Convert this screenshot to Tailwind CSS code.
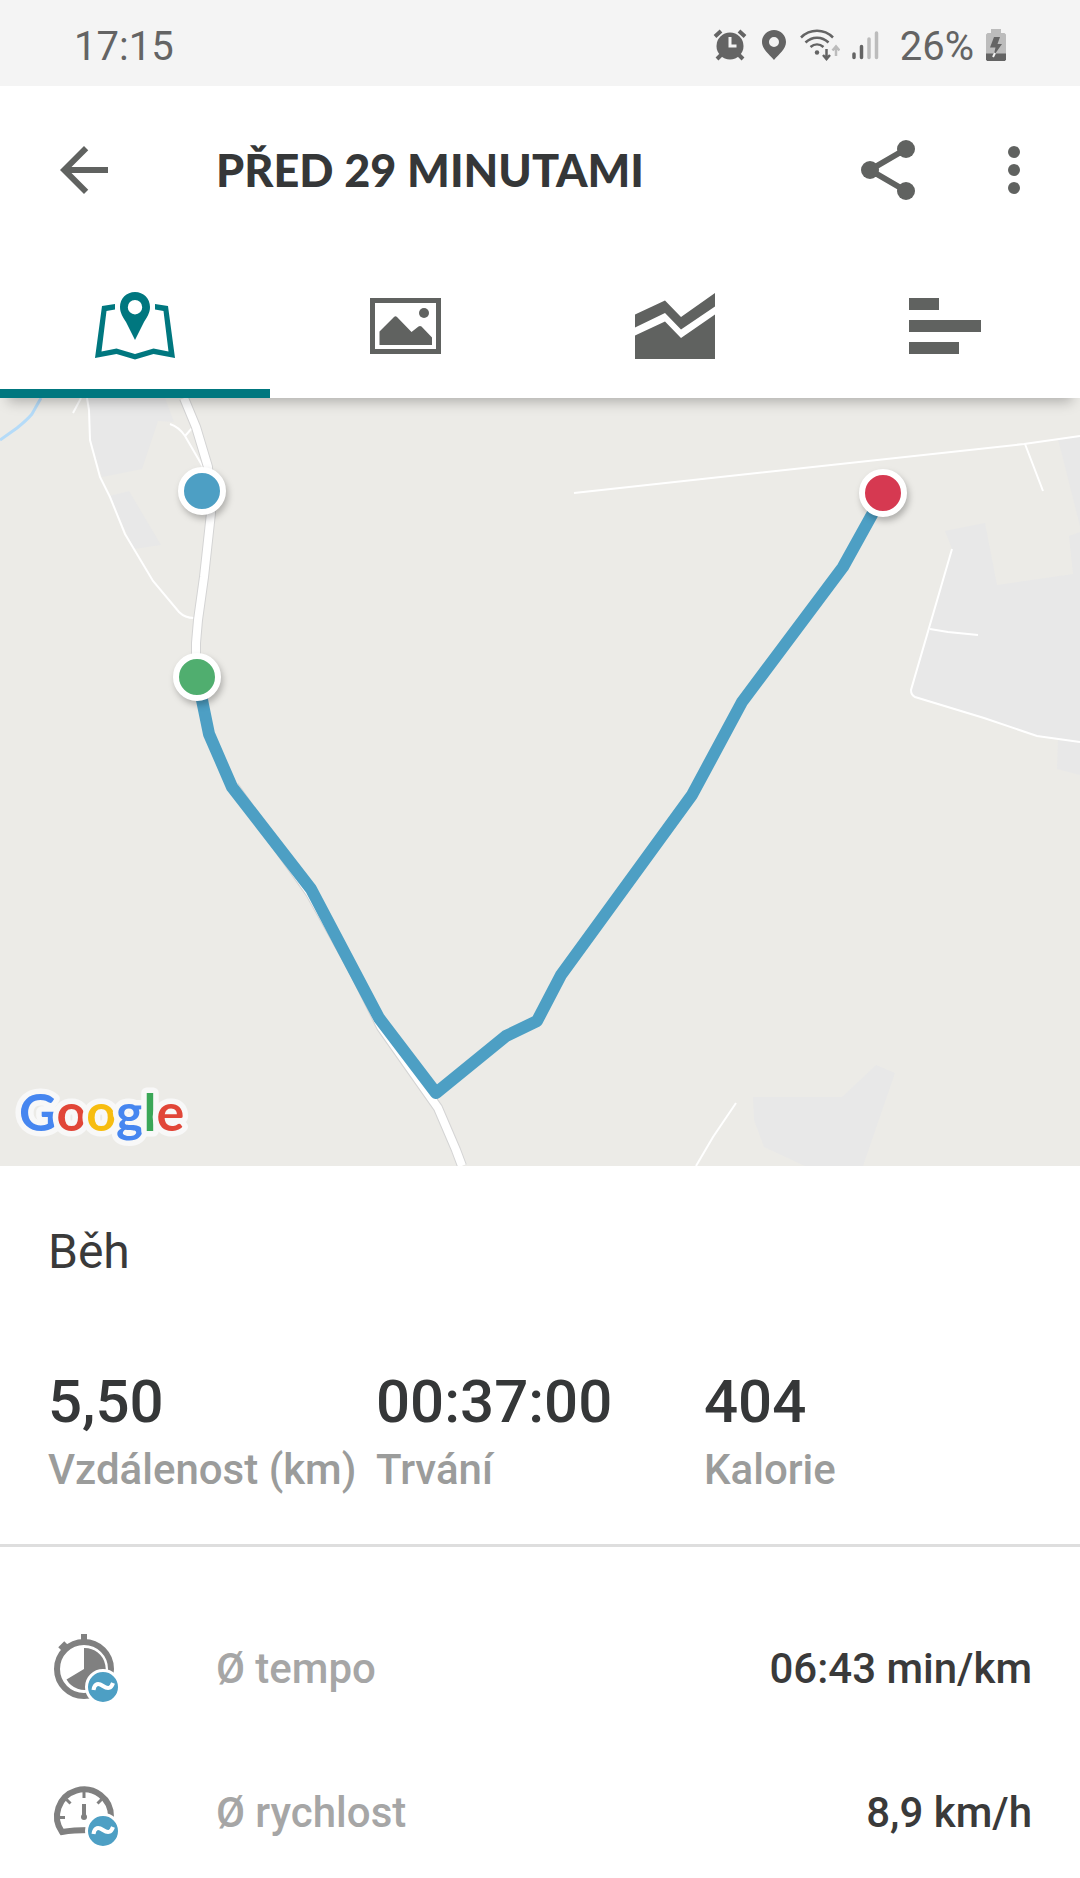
<!DOCTYPE html>
<html lang="cs">
<head>
    <meta charset="UTF-8">
    <meta name="viewport" content="width=device-width, initial-scale=1.0">
    <title>Běh - před 29 minutami</title>
    <script src="https://cdn.jsdelivr.net/npm/@tailwindcss/browser@4"></script>
</head>
<body class="bg-white text-[#3a3a3a] font-[Roboto,sans-serif] min-h-screen">
    <!-- Status bar -->
    <div class="bg-[#f4f4f4] text-[#646464] h-[86px] px-[74px] pt-2 flex items-center justify-between text-[40px] leading-[48px]">
        <span>17:15</span>
        <div class="flex items-center gap-3">
            <svg class="w-9 h-8 mb-1" viewBox="0 0 36 32" fill="none" stroke="currentColor">
                <circle cx="18" cy="17" r="13.5" fill="currentColor" stroke="none"/>
                <path d="M3 7.500l6-5.500M33 7.500l-6-5.500" stroke-width="4"/>
                <path d="M9 26l-4 4M27 26l4 4" stroke-width="4"/>
                <path d="M18 8v9h6.500" stroke="#f4f4f4" stroke-width="3"/>
            </svg>
            <svg class="w-7 h-8 mb-1" viewBox="0 0 28 32" fill="currentColor">
                <path fill-rule="evenodd" d="M14 1C7.400 1 2 6.200 2 13c0 7 7 12 12 18 5-6 12-11 12-18C26 6.200 20.600 1 14 1zm0 7a5 5 0 1 1 0 10 5 5 0 0 1 0-10z"/>
            </svg>
            <svg class="w-10 h-8 mb-1" viewBox="0 0 40 32" fill="none" stroke="currentColor" stroke-width="2.500">
                <path d="M1 8.500C10-.5 24-.5 33 8.500M5.500 13.500c6.500-6.500 16.500-6.500 23 0M10.500 18c4-3.500 9-3.500 13 0"/>
                <circle cx="17" cy="23.500" r="2.200" fill="currentColor" stroke="none"/>
                <path d="M26.500 20v9M23 26l3.500 4 3.500-4"/>
                <path d="M36 27v-9M32.500 21.500l3.500-4 3.500 4" stroke="#bcbcbc"/>
            </svg>
            <svg class="w-7 h-8 mb-1" viewBox="0 0 28 32" fill="none" stroke="currentColor" stroke-width="3.500" stroke-linecap="round">
                <path d="M2 25v3.500M9.500 17.500v11"/>
                <path d="M17 10v18.500M24.500 4v24.500" stroke="#bcbcbc"/>
            </svg>
            <span class="ml-2">26%</span>
            <svg class="w-5 h-8 mb-1" viewBox="0 0 20 32">
                <path d="M5 0h10v4h3.500L20 5.500V26H0V5.500L1.500 4H5z" fill="#bcbcbc"/>
                <path d="M0 24.500h20v6L19 32H1l-1-1.500z" fill="#646464"/>
                <path d="M8 8h6l-2.500 7H16L7.500 27l2-8.500H4z" fill="#646464"/>
                <path d="M9 24l-2 4" stroke="#f4f4f4" stroke-width="2"/>
            </svg>
        </div>
    </div>

    <header class="relative z-10 bg-white text-[#606260] shadow-[0_12px_12px_-8px_rgba(0,0,0,0.25)]">
        <!-- App bar -->
        <div class="h-[168px] pl-12 pr-[30px] flex items-center">
            <button type="button" aria-label="Zpět" class="w-[72px] h-[72px]">
                <svg class="w-full h-full" viewBox="0 0 24 24" fill="currentColor">
                    <path d="M20 11H7.830l5.590-5.590L12 4l-8 8 8 8 1.410-1.410L7.830 13H20v-2z"/>
                </svg>
            </button>
            <h1 class="ml-24 flex-1 font-[Lato,sans-serif] font-black text-[45px] leading-[56px] text-[#353738]">PŘED 29 MINUTAMI</h1>
            <button type="button" aria-label="Sdílet" class="w-[72px] h-[72px] mr-[54px]">
                <svg class="w-full h-full" viewBox="0 0 24 24" fill="currentColor">
                    <path d="M18 5 6 12l12 7" fill="none" stroke="currentColor" stroke-width="2"/>
                    <circle cx="18" cy="5" r="3"/>
                    <circle cx="6" cy="12" r="3"/>
                    <circle cx="18" cy="19" r="3"/>
                </svg>
            </button>
            <button type="button" aria-label="Další možnosti" class="w-[72px] h-[72px]">
                <svg class="w-full h-full" viewBox="0 0 24 24" fill="currentColor">
                    <circle cx="12" cy="6" r="2"/>
                    <circle cx="12" cy="12" r="2"/>
                    <circle cx="12" cy="18" r="2"/>
                </svg>
            </button>
        </div>

        <!-- Tabs -->
        <nav class="grid grid-cols-4 h-36">
            <button type="button" aria-label="Mapa" class="flex items-center justify-center border-b-[9px] border-[#00777f] pt-[9px] text-[#00777f]">
                <svg class="w-20 h-[68px]" viewBox="0 0 80 68" fill="currentColor">
                    <path fill-rule="evenodd" d="M40 0C31.500 0 25 6.500 25 15c0 6 3 10 6 15l9 18 9-18c3-5 6-9 6-15C55 6.500 48.500 0 40 0zm0 8a7.200 7.200 0 1 1 0 14.400A7.200 7.200 0 0 1 40 8z"/>
                    <path d="M20 12 7 14 0 66l21.500-4L40 67.500 58.500 62 80 66 73 14l-13-2v5.500l8.500 1.500L73.500 59.500l-15-3L40 62l-18.500-5.500-15 3L11.500 19l8.500-1.500z"/>
                </svg>
            </button>
            <button type="button" aria-label="Fotky" class="flex items-center justify-center">
                <svg class="w-[71px] h-14" viewBox="0 0 71 56" fill="currentColor">
                    <path d="M2.500 2.500h66v51h-66z" fill="none" stroke="currentColor" stroke-width="5"/>
                    <path d="M9.500 33.500 24 19q1.500-1.500 3 0L41.500 34l7-5.500q1.500-1 3 0l10.500 11V47h-52.500z"/>
                    <circle cx="54" cy="15" r="5"/>
                </svg>
            </button>
            <button type="button" aria-label="Grafy" class="flex items-center justify-center">
                <svg class="w-20 h-[66px]" viewBox="0 0 80 66" fill="currentColor">
                    <path d="M0 21.500 30 7.500 46 24 80 0v13.500l-34 23-16-16.500L0 34.500z"/>
                    <path d="M0 42.500 30 28.500 46 45l34-23.500V66H0z"/>
                </svg>
            </button>
            <button type="button" aria-label="Kola" class="flex items-center justify-center">
                <svg class="w-[72px] h-14" viewBox="0 0 72 56" fill="currentColor">
                    <path d="M0 0h30v12H0zM0 22h72v12H0zM0 44h50v12H0z"/>
                </svg>
            </button>
        </nav>
    </header>

    <main>
        <!-- Map -->
        <svg class="block w-full bg-[#ecebe7]" viewBox="0 0 1080 768" fill="none" role="img" aria-label="Mapa trasy">
            <!-- Built-up areas -->
            <g fill="#e8e8e8">
                <path d="M88 0h77l9 24-16-1-16 48-40 8-12-37z"/>
                <path d="M109 98l20-5 32 54-27 4z"/>
                <path d="M1058 41l22-3v90z"/>
                <path d="M1080 134l-11 4 4 38-76 11-12-62-40 8 7 18-41 143 3 5 70 21 53 18 43 7z"/>
                <path d="M1058 342l22 2v33l-23-6z"/>
                <path d="M753 699h89l34-32 19 8-32 93h-58l-41-19-10-27z"/>
            </g>
            <path d="M41 0 32 16Q27 22 17 30L0 42" stroke="#b5dbf8" stroke-width="3"/>

            <!-- Small roads -->
            <g stroke="#fff" stroke-width="2">
                <path d="M87 0l2 12 1 30 10 37 10 20 15 37 28 47 26 31q6 6 15 6"/>
                <path d="M81 0l-8 15M170 26q9 3 15 12l18 31M185 38l8-9"/>
                <path d="M574 95l450-49 56-8M1025 46l18 47"/>
                <path d="M952 151l-41 141q0 5 4 7l69 21 53 18 43 6M930 231l18 3 30 3"/>
                <path d="M736 705l-23 34-17 29"/>
            </g>

            <!-- Main road -->
            <g stroke-linejoin="round">
                <path d="M184 0l12 29 12 40 3 46-7 64-6 43-2 23v20M234 388l76 107 43 77 28 57 57 81 18 42 6 16" stroke="#d4d4d4" stroke-width="10"/>
                <path d="M184 0l12 29 12 40 3 46-7 64-6 43-2 23v20M234 388l76 107 43 77 28 57 57 81 18 42 6 16" stroke="#fff" stroke-width="8"/>
            </g>

            <!-- Route -->
            <path d="M196 279l6 23 7 34 23 53 79 102 68 129 57 75 70-57 31-15 24-46 131-180 50-93 101-135 41-74" stroke="#4d9fc4" stroke-width="12" stroke-linejoin="round"/>

            <g stroke="#fff" stroke-width="6" class="drop-shadow-[2px_4px_3px_rgba(0,0,0,0.25)]">
                <circle cx="202" cy="93" r="21" fill="#4d9fc4"/>
                <circle cx="197" cy="279" r="21" fill="#50ae6f"/>
                <circle cx="883" cy="95" r="21" fill="#d63951"/>
            </g>

            <text x="19" y="733" class="font-[Lato,sans-serif] font-bold text-[52px] [paint-order:stroke]" stroke="#f8f8f8" stroke-width="11" stroke-linejoin="round"><tspan fill="#4686f0">G</tspan><tspan fill="#e14638">o</tspan><tspan fill="#f7bd10">o</tspan><tspan fill="#4686f0">g</tspan><tspan fill="#3aa757">l</tspan><tspan fill="#e14638">e</tspan></text>
        </svg>

        <!-- Summary -->
        <section class="border-b-[3px] border-[#dedede] px-12 pt-[58px] pb-[50px]">
            <h2 class="text-[48px] leading-[56px]">Běh</h2>
            <dl class="mt-[86px] grid grid-cols-3 font-medium whitespace-nowrap">
                <div class="flex flex-col-reverse gap-2">
                    <dt class="text-[42px] leading-[48px] text-[#9b9c9b]">Vzdálenost (km)</dt>
                    <dd class="text-[60px] leading-[72px] text-[#353738]">5,50</dd>
                </div>
                <div class="flex flex-col-reverse gap-2">
                    <dt class="text-[42px] leading-[48px] text-[#9b9c9b]">Trvání</dt>
                    <dd class="text-[60px] leading-[72px] text-[#353738]">00:37:00</dd>
                </div>
                <div class="flex flex-col-reverse gap-2">
                    <dt class="text-[42px] leading-[48px] text-[#9b9c9b]">Kalorie</dt>
                    <dd class="text-[60px] leading-[72px] text-[#353738]">404</dd>
                </div>
            </dl>
        </section>

        <!-- Averages -->
        <dl class="px-12 pt-[87px] pb-[30px] flex flex-col gap-[74px] text-[42px] leading-[48px] font-medium">
            <div class="flex items-center h-[70px]">
                <dt class="flex items-center flex-1 text-[#a6a6a6]">
                    <span class="w-42">
                        <svg class="w-[72px] h-[70px]" viewBox="-6 0 72 70" fill="none" stroke="#808080">
                            <circle cx="30" cy="35" r="27" stroke-width="6"/>
                            <path d="M30 0v8" stroke-width="6"/>
                            <path d="M6 15l6-6" stroke-width="5"/>
                            <path d="M30 35V14a21 21 0 1 1-17.500 31.500z" fill="#808080" stroke="none"/>
                            <circle cx="49" cy="53" r="16.500" fill="#4d9fc4" stroke="#fff" stroke-width="3"/>
                            <path d="M39.500 56c1-7 5-7 9.500-4s8 3 10-3" stroke="#fff" stroke-width="4"/>
                        </svg>
                    </span>
                    Ø tempo
                </dt>
                <dd>06:43 min/km</dd>
            </div>
            <div class="flex items-center h-[70px]">
                <dt class="flex items-center flex-1 text-[#a6a6a6]">
                    <span class="w-42">
                        <svg class="w-[72px] h-[70px]" viewBox="-6 0 72 70" fill="none" stroke="#808080">
                            <path d="M57 39a27 27 0 1 0-49 15q11-2 28-2" stroke-width="6"/>
                            <path d="M30 12v8M5 39.500h6M50 39.500h5M12.500 21.500l4 4M47.500 21.500l-4 4" stroke-width="3"/>
                            <path d="M30 26v13" stroke-width="4"/>
                            <circle cx="30" cy="39" r="3" fill="#808080" stroke="none"/>
                            <circle cx="49" cy="53" r="16.500" fill="#4d9fc4" stroke="#fff" stroke-width="3"/>
                            <path d="M39.500 56c1-7 5-7 9.500-4s8 3 10-3" stroke="#fff" stroke-width="4"/>
                        </svg>
                    </span>
                    Ø rychlost
                </dt>
                <dd>8,9 km/h</dd>
            </div>
        </dl>
    </main>
</body>
</html>
